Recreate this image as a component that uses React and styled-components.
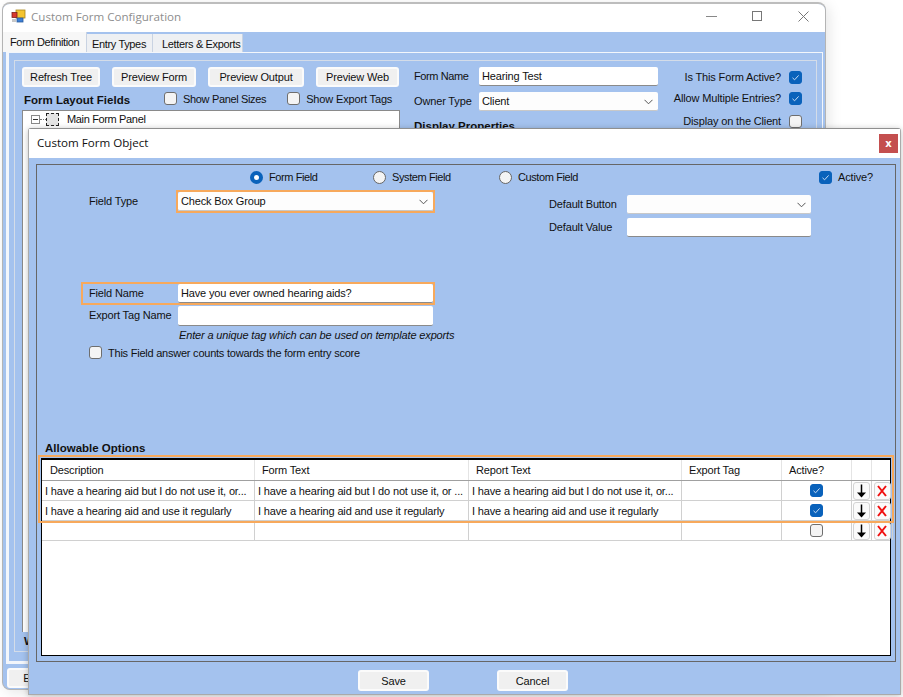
import React from "react";
import styled, { createGlobalStyle } from "styled-components";

const BLUE = "#a4c2ee";
const ORANGE = "#f7a95c";
const UI = `"Liberation Sans", Arial, sans-serif`;

const Global = createGlobalStyle`
  html, body { margin: 0; padding: 0; background: #fff; }
  body { font: 11px ${UI}; letter-spacing: -0.15px; color: #111; }
  #root { position: relative; width: 903px; height: 697px; overflow: hidden; }
`;

const Desktop = styled.div`
  position: relative;
  width: 903px;
  height: 697px;
  overflow: hidden;
  background: #fff;
`;

const BackWindow = styled.section`
  position: absolute;
  left: 2px;
  top: 2px;
  width: 824px;
  height: 688px;
  box-sizing: border-box;
  border: 1px solid #b4b4b4;
  border-top: 2px solid #bdbdbd;
  border-radius: 8px;
  background: ${BLUE};
  box-shadow: 3px 3px 14px rgba(0, 0, 0, 0.1);
  display: flex;
  flex-direction: column;
  overflow: hidden;
`;

const TitleBar = styled.header`
  height: 28px;
  flex: none;
  box-sizing: border-box;
  background: #fff;
  display: flex;
  align-items: center;
  padding: 0 0 4px 8px;
  gap: 5px;
`;

const TitleText = styled.span`
  font: 11.6px "Open Sans", sans-serif;
  letter-spacing: 0;
  color: #8e8e8e;
  flex: 1;
`;

const WinControls = styled.div`
  display: flex;
  align-items: center;
  gap: 35px;
  padding: 0 16px 0 0;
`;

const BackBody = styled.div`
  flex: 1;
  min-height: 0;
  display: flex;
  flex-direction: column;
`;

const TabStrip = styled.nav`
  height: 20px;
  display: flex;
  align-items: flex-end;
  flex: none;
`;

const Tab = styled.div`
  box-sizing: border-box;
  height: ${(p) => (p.$active ? 20 : 18)}px;
  width: ${(p) => p.$w}px;
  background: ${(p) => (p.$active ? "#f7f7f7" : "#eef0f3")};
  border-right: 1px solid #c9d3e2;
  padding: ${(p) => (p.$active ? "4px 0 0 7px" : `4px 0 0 ${p.$pl}px`)};
  letter-spacing: -0.35px;
  white-space: nowrap;
`;

const TabPage = styled.div`
  flex: 1;
  min-height: 0;
  border-style: solid;
  border-color: #f3f6fb;
  border-width: 1px 1px 3px 3px;
  margin: 0 2px 0 3px;
  padding: 7px 5px 9px 5px;
  display: flex;
`;

const GroupFrame = styled.div`
  flex: 1;
  border: 1px solid #d4dce8;
  padding: 6px 8px 0 7px;
  display: grid;
  grid-template-columns: 378px 14px 245px 1fr;
  grid-template-rows: auto 1fr;
  position: relative;
`;

const LeftTop = styled.div`
  grid-column: 1;
  display: flex;
  flex-direction: column;
`;

const ButtonRow = styled.div`
  display: flex;
  gap: 12px;
`;

const WinButton = styled.button`
  box-sizing: border-box;
  height: ${(p) => p.$h || 20}px;
  width: ${(p) => p.$w}px;
  flex: none;
  padding: 0;
  background: #f0f0f0;
  border: 2px solid #fbfbfb;
  border-radius: 3px;
  font: 11px ${UI};
  letter-spacing: -0.15px;
  color: #111;
`;

const LayoutHeader = styled.div`
  display: flex;
  align-items: center;
  height: 23px;
  padding-left: 2px;
`;

const BoldLabel = styled.b`
  font: bold 11.5px ${UI};
  letter-spacing: 0;
  color: #111;
`;

const LayoutTitle = styled(BoldLabel)`
  margin-top: 3px;
`;

const CheckLabel = styled.label`
  display: inline-flex;
  align-items: center;
  gap: 6px;
  margin-left: ${(p) => p.$ml || 0}px;
  letter-spacing: ${(p) => p.$ls ?? -0.15}px;
  white-space: nowrap;
`;

const Box = styled.span`
  box-sizing: border-box;
  width: 13px;
  height: 13px;
  flex: none;
  display: inline-flex;
  align-items: center;
  justify-content: center;
  border-radius: 3px;
  background: ${(p) => (p.$on ? "#0a62bb" : "#f4f4f4")};
  border: 1px solid ${(p) => (p.$on ? "#0a62bb" : "#6e6e6e")};
`;

const Check = ({ on }) => (
  <Box $on={on}>
    {on && (
      <svg width="9" height="9" viewBox="0 0 9 9" fill="none">
        <path d="M1.5 4.8 L3.6 6.8 L7.6 2.4" stroke="#c8dcf3" strokeWidth="1" />
      </svg>
    )}
  </Box>
);

const RadioDot = styled.span`
  box-sizing: border-box;
  width: 13px;
  height: 13px;
  flex: none;
  border-radius: 50%;
  background: ${(p) => (p.$on ? "#fff" : "#f4f4f4")};
  border: ${(p) => (p.$on ? "4px solid #0a62bb" : "1px solid #666")};
`;

const Tree = styled.div`
  background: #fff;
  border: 1px solid #8a8a8a;
  border-bottom: none;
  box-sizing: border-box;
  width: 378px;
  height: 522px;
  padding: 0 0 0 8px;
`;

const TreeRow = styled.div`
  display: flex;
  align-items: center;
  height: 16px;
  letter-spacing: -0.35px;
`;

const TreeToggle = styled.span`
  box-sizing: border-box;
  width: 9px;
  height: 9px;
  border: 1px solid #8a8a8a;
  display: inline-flex;
  align-items: center;
  justify-content: center;
  &::after {
    content: "";
    width: 5px;
    height: 1px;
    background: #333;
  }
`;

const TreeDash = styled.span`
  width: 6px;
  border-top: 1px dotted #777;
`;

const PanelGlyph = styled.span`
  box-sizing: border-box;
  width: 13px;
  height: 13px;
  border: 1px dashed #222;
  background: #e4e4e4;
  margin-right: 8px;
`;

const MiddleTop = styled.div`
  grid-column: 3;
  display: flex;
  flex-direction: column;
  gap: 6px;
`;

const FieldRow = styled.div`
  display: flex;
  align-items: center;
  white-space: nowrap;
`;

const FieldLabel = styled.span`
  width: ${(p) => p.$w}px;
  flex: none;
  margin-top: -2px;
  letter-spacing: ${(p) => p.$ls ?? -0.15}px;
`;

const TextBox = styled.div`
  box-sizing: border-box;
  width: ${(p) => p.$w}px;
  height: ${(p) => p.$h || 19}px;
  flex: none;
  background: #fff;
  border-bottom: 1px solid #8a8a8a;
  border-radius: 2px;
  padding: 1px 0 0 3px;
  line-height: 17px;
  color: #111;
  white-space: nowrap;
  overflow: hidden;
`;

const SelectBox = styled(TextBox)`
  background: #fdfdfd;
  border-bottom: 1px solid #c8c8c8;
  display: flex;
  align-items: center;
  justify-content: space-between;
  padding: 1px 5px 0 3px;
`;

const Chevron = () => (
  <svg width="9" height="6" viewBox="0 0 9 6" fill="none">
    <path d="M0.5 0.8 L4.5 4.8 L8.5 0.8" stroke="#555" strokeWidth="1" />
  </svg>
);

const DisplayProps = styled(BoldLabel)`
  display: block;
  margin-top: 3px;
`;

const RightTop = styled.div`
  grid-column: 4;
  display: flex;
  flex-direction: column;
  align-items: flex-end;
  padding-right: 6px;
  margin-top: -1px;
`;

const FlagRow = styled.div`
  display: flex;
  align-items: center;
  gap: 8px;
  height: ${(p) => p.$h}px;
  white-space: nowrap;
`;

const SideLabel = styled.b`
  position: absolute;
  left: 9px;
  bottom: 4px;
  font: bold 11.5px ${UI};
`;

const BackFooter = styled.div`
  flex: none;
  height: 25px;
  box-sizing: border-box;
  padding: 4px 0 0 4px;
`;

const Dialog = styled.section`
  position: absolute;
  left: 28px;
  top: 128px;
  width: 873px;
  height: 567px;
  box-sizing: border-box;
  border: 1px solid #aaa;
  border-top-color: #8f8f8f;
  border-radius: 3px 3px 0 0;
  background: ${BLUE};
  box-shadow: 0 1px 6px rgba(0, 0, 0, 0.25);
  display: flex;
  flex-direction: column;
`;

const DialogTitle = styled.header`
  height: 29px;
  flex: none;
  box-sizing: border-box;
  background: #fff;
  display: flex;
  align-items: center;
  justify-content: space-between;
  padding: 0 2px 0 8px;
  font: 11.6px "Open Sans", sans-serif;
  letter-spacing: 0;
  color: #111;
`;

const DialogName = styled.span`
  margin-top: -2px;
`;

const CloseBtn = styled.span`
  width: 19px;
  height: 19px;
  background: #c44f4f;
  color: #fff;
  display: flex;
  align-items: center;
  justify-content: center;
  font: bold 10px "DejaVu Sans", sans-serif;
`;

const DialogGroup = styled.div`
  box-sizing: border-box;
  margin: 6px 4px 0 7px;
  height: 498px;
  flex: none;
  border: 1px solid #666;
  padding: 5px 4px 5px 4px;
  display: flex;
  flex-direction: column;
`;

const RadioRow = styled.div`
  display: flex;
  align-items: center;
  height: 14px;
  padding-left: 209px;
`;

const RadioLabel = styled.label`
  display: inline-flex;
  align-items: center;
  gap: 6px;
  width: ${(p) => p.$w}px;
  flex: none;
  letter-spacing: -0.4px;
  white-space: nowrap;
`;

const ActiveCheck = styled(CheckLabel)`
  margin-left: auto;
  margin-right: 18px;
`;

const Upper = styled.div`
  display: flex;
  margin-top: 6px;
`;

const LeftFields = styled.div`
  width: 508px;
  flex: none;
  display: flex;
  flex-direction: column;
`;

const RightFields = styled.div`
  padding-top: 5px;
  display: flex;
  flex-direction: column;
  gap: 4px;
`;

const TypeRow = styled(FieldRow)`
  padding-left: 48px;
`;

const Highlight = styled.div`
  box-sizing: border-box;
  border: 2px solid ${ORANGE};
  display: inline-flex;
  align-items: center;
  flex: none;
`;

const NameRow = styled(Highlight)`
  margin: 69px 0 0 40px;
  width: 354px;
  height: 23px;
  padding-left: 6px;
`;

const TagRow = styled(FieldRow)`
  margin-top: 1px;
  padding-left: 48px;
`;

const Hint = styled.i`
  display: block;
  margin: 3px 0 0 138px;
  font: italic 11px ${UI};
  letter-spacing: -0.15px;
  white-space: nowrap;
`;

const ScoreCheck = styled(CheckLabel)`
  margin: 5px 0 0 48px;
`;

const AllowTitle = styled(BoldLabel)`
  margin-top: auto;
  margin-bottom: 2px;
  margin-left: 4px;
  display: block;
  height: 14px;
  line-height: 14px;
`;

const GridFrame = styled.div`
  position: relative;
  box-sizing: border-box;
  flex: none;
  height: 198px;
  margin-top: 1px;
  border: 1px solid #000;
  background: #fff;
  border-top-width: 2px;
`;

const GridHighlight = styled.div`
  position: absolute;
  left: -4px;
  top: -5px;
  right: -4px;
  height: 68px;
  box-sizing: border-box;
  border: 2px solid ${ORANGE};
  pointer-events: none;
`;

const COLS = "213px 214px 213px 100px 70px 20px 21px";

const HeaderRow = styled.div`
  display: grid;
  grid-template-columns: ${COLS};
  height: 21px;
  border-bottom: 1px solid #a0a0a0;
  box-sizing: border-box;
`;

const HeaderCell = styled.div`
  padding: 4px 0 0 7px;
  border-right: 1px solid #e4e4e4;
  box-sizing: border-box;
  white-space: nowrap;
  &:first-child {
    padding-left: 8px;
  }
`;

const DataRow = styled.div`
  display: grid;
  grid-template-columns: ${COLS};
  height: 20px;
  border-bottom: 1px solid #d0d0d0;
  box-sizing: border-box;
`;

const DataCell = styled.div`
  box-sizing: border-box;
  border-right: 1px solid #d0d0d0;
  padding: 4px 0 0 3px;
  white-space: nowrap;
  display: ${(p) => (p.$center ? "flex" : "block")};
  justify-content: center;
  align-items: center;
  ${(p) => p.$center && "padding: 0;"}
`;

const IconBtn = styled.span`
  box-sizing: border-box;
  width: 17px;
  height: 18px;
  border: 1px solid #d4d4d4;
  border-radius: 3px;
  background: #fbfbfb;
  display: flex;
  align-items: center;
  justify-content: center;
`;

const DownArrow = () => (
  <svg width="11" height="14" viewBox="0 0 11 14" fill="none">
    <path d="M5.5 0.5 V12" stroke="#000" strokeWidth="1.5" />
    <path d="M1 8.5 H10 L5.5 13.5 Z" fill="#000" />
  </svg>
);

const RedX = () => (
  <svg width="10" height="12" viewBox="0 0 10 12" fill="none">
    <path d="M1 1 L9 11 M9 1 L1 11" stroke="#f01010" strokeWidth="2" />
  </svg>
);

const DialogFooter = styled.div`
  flex: 1;
  display: flex;
  padding: 8px 0 0 329px;
  gap: 68px;
`;

const AppIcon = () => (
  <svg width="15" height="15" viewBox="0 0 15 15">
    <rect x="5" y="1" width="9" height="8" fill="#f4c430" stroke="#a8861a" strokeWidth="0.8" />
    <rect x="1" y="3.5" width="5" height="5" fill="#d8382c" stroke="#7e1f19" strokeWidth="0.8" />
    <rect x="6" y="9" width="6" height="4" fill="#3d7fd6" stroke="#2a5a9c" strokeWidth="0.8" />
    <rect x="1" y="10" width="4" height="3" fill="#c8c8c8" />
  </svg>
);

const rows = [
  {
    d: "I have a hearing aid but I do not use it, or...",
    f: "I have a hearing aid but I do not use it, or ...",
    r: "I have a hearing aid but I do not use it, or...",
    on: true,
  },
  {
    d: "I have a hearing aid and use it regularly",
    f: "I have a hearing aid and use it regularly",
    r: "I have a hearing aid and use it regularly",
    on: true,
  },
  { d: "", f: "", r: "", on: false },
];

export default function App() {
  return (
    <Desktop>
      <Global />
      <BackWindow>
        <TitleBar>
          <AppIcon />
          <TitleText>Custom Form Configuration</TitleText>
          <WinControls>
            <svg width="11" height="11" viewBox="0 0 11 11">
              <path d="M0 5.5 H11" stroke="#888" />
            </svg>
            <svg width="11" height="11" viewBox="0 0 11 11" fill="none">
              <rect x="0.5" y="0.5" width="9" height="9" stroke="#777" />
            </svg>
            <svg width="11" height="11" viewBox="0 0 11 11" fill="none">
              <path d="M0.5 0.5 L10.5 10.5 M10.5 0.5 L0.5 10.5" stroke="#777" />
            </svg>
          </WinControls>
        </TitleBar>
        <BackBody>
          <TabStrip>
            <Tab $active $w={84}>Form Definition</Tab>
            <Tab $w={66} $pl={5}>Entry Types</Tab>
            <Tab $w={90} $pl={9}>Letters &amp; Exports</Tab>
          </TabStrip>
          <TabPage>
            <GroupFrame>
              <LeftTop>
                <ButtonRow>
                  <WinButton $w={78}>Refresh Tree</WinButton>
                  <WinButton $w={84}>Preview Form</WinButton>
                  <WinButton $w={96}>Preview Output</WinButton>
                  <WinButton $w={83}>Preview Web</WinButton>
                </ButtonRow>
                <LayoutHeader>
                  <LayoutTitle>Form Layout Fields</LayoutTitle>
                  <CheckLabel $ml={34} $ls={-0.35}><Check />Show Panel Sizes</CheckLabel>
                  <CheckLabel $ml={21}><Check />Show Export Tags</CheckLabel>
                </LayoutHeader>
                <Tree>
                  <TreeRow>
                    <TreeToggle />
                    <TreeDash />
                    <PanelGlyph />
                    Main Form Panel
                  </TreeRow>
                </Tree>
              </LeftTop>
              <MiddleTop>
                <FieldRow>
                  <FieldLabel $w={65} $ls={-0.4}>Form Name</FieldLabel>
                  <TextBox $w={179}>Hearing Test</TextBox>
                </FieldRow>
                <FieldRow>
                  <FieldLabel $w={65}>Owner Type</FieldLabel>
                  <SelectBox $w={179} $h={19}>Client<Chevron /></SelectBox>
                </FieldRow>
                <DisplayProps>Display Properties</DisplayProps>
              </MiddleTop>
              <RightTop>
                <FlagRow $h={22}>Is This Form Active?<Check on /></FlagRow>
                <FlagRow $h={20}>Allow Multiple Entries?<Check on /></FlagRow>
                <FlagRow $h={26}>Display on the Client<Check /></FlagRow>
              </RightTop>
              <SideLabel>W</SideLabel>
            </GroupFrame>
          </TabPage>
        </BackBody>
        <BackFooter>
          <WinButton $w={50}>Exit</WinButton>
        </BackFooter>
      </BackWindow>

      <Dialog>
        <DialogTitle>
          <DialogName>Custom Form Object</DialogName>
          <CloseBtn>x</CloseBtn>
        </DialogTitle>
        <DialogGroup>
          <RadioRow>
            <RadioLabel $w={123}><RadioDot $on />Form Field</RadioLabel>
            <RadioLabel $w={126}><RadioDot />System Field</RadioLabel>
            <RadioLabel $w={100}><RadioDot />Custom Field</RadioLabel>
            <ActiveCheck><Check on />Active?</ActiveCheck>
          </RadioRow>
          <Upper>
            <LeftFields>
              <TypeRow>
                <FieldLabel $w={87}>Field Type</FieldLabel>
                <Highlight>
                  <SelectBox $w={255} $h={19}>Check Box Group<Chevron /></SelectBox>
                </Highlight>
              </TypeRow>
              <NameRow>
                <FieldLabel $w={89}>Field Name</FieldLabel>
                <TextBox $w={255} $h={19}>Have you ever owned hearing aids?</TextBox>
              </NameRow>
              <TagRow>
                <FieldLabel $w={89}>Export Tag Name</FieldLabel>
                <TextBox $w={255} $h={20} />
              </TagRow>
              <Hint>Enter a unique tag which can be used on template exports</Hint>
              <ScoreCheck $ls={-0.23}><Check />This Field answer counts towards the form entry score</ScoreCheck>
            </LeftFields>
            <RightFields>
              <FieldRow>
                <FieldLabel $w={78}>Default Button</FieldLabel>
                <SelectBox $w={184} $h={19}><span /><Chevron /></SelectBox>
              </FieldRow>
              <FieldRow>
                <FieldLabel $w={78}>Default Value</FieldLabel>
                <TextBox $w={184} $h={19} />
              </FieldRow>
            </RightFields>
          </Upper>
          <AllowTitle>Allowable Options</AllowTitle>
          <GridFrame>
            <HeaderRow>
              <HeaderCell>Description</HeaderCell>
              <HeaderCell>Form Text</HeaderCell>
              <HeaderCell>Report Text</HeaderCell>
              <HeaderCell>Export Tag</HeaderCell>
              <HeaderCell>Active?</HeaderCell>
              <HeaderCell />
              <HeaderCell />
            </HeaderRow>
            {rows.map((r, i) => (
              <DataRow key={i}>
                <DataCell>{r.d}</DataCell>
                <DataCell>{r.f}</DataCell>
                <DataCell>{r.r}</DataCell>
                <DataCell />
                <DataCell $center><Check on={r.on} /></DataCell>
                <DataCell $center><IconBtn><DownArrow /></IconBtn></DataCell>
                <DataCell $center><IconBtn><RedX /></IconBtn></DataCell>
              </DataRow>
            ))}
            <GridHighlight />
          </GridFrame>
        </DialogGroup>
        <DialogFooter>
          <WinButton $w={71} $h={21}>Save</WinButton>
          <WinButton $w={71} $h={21}>Cancel</WinButton>
        </DialogFooter>
      </Dialog>
    </Desktop>
  );
}
